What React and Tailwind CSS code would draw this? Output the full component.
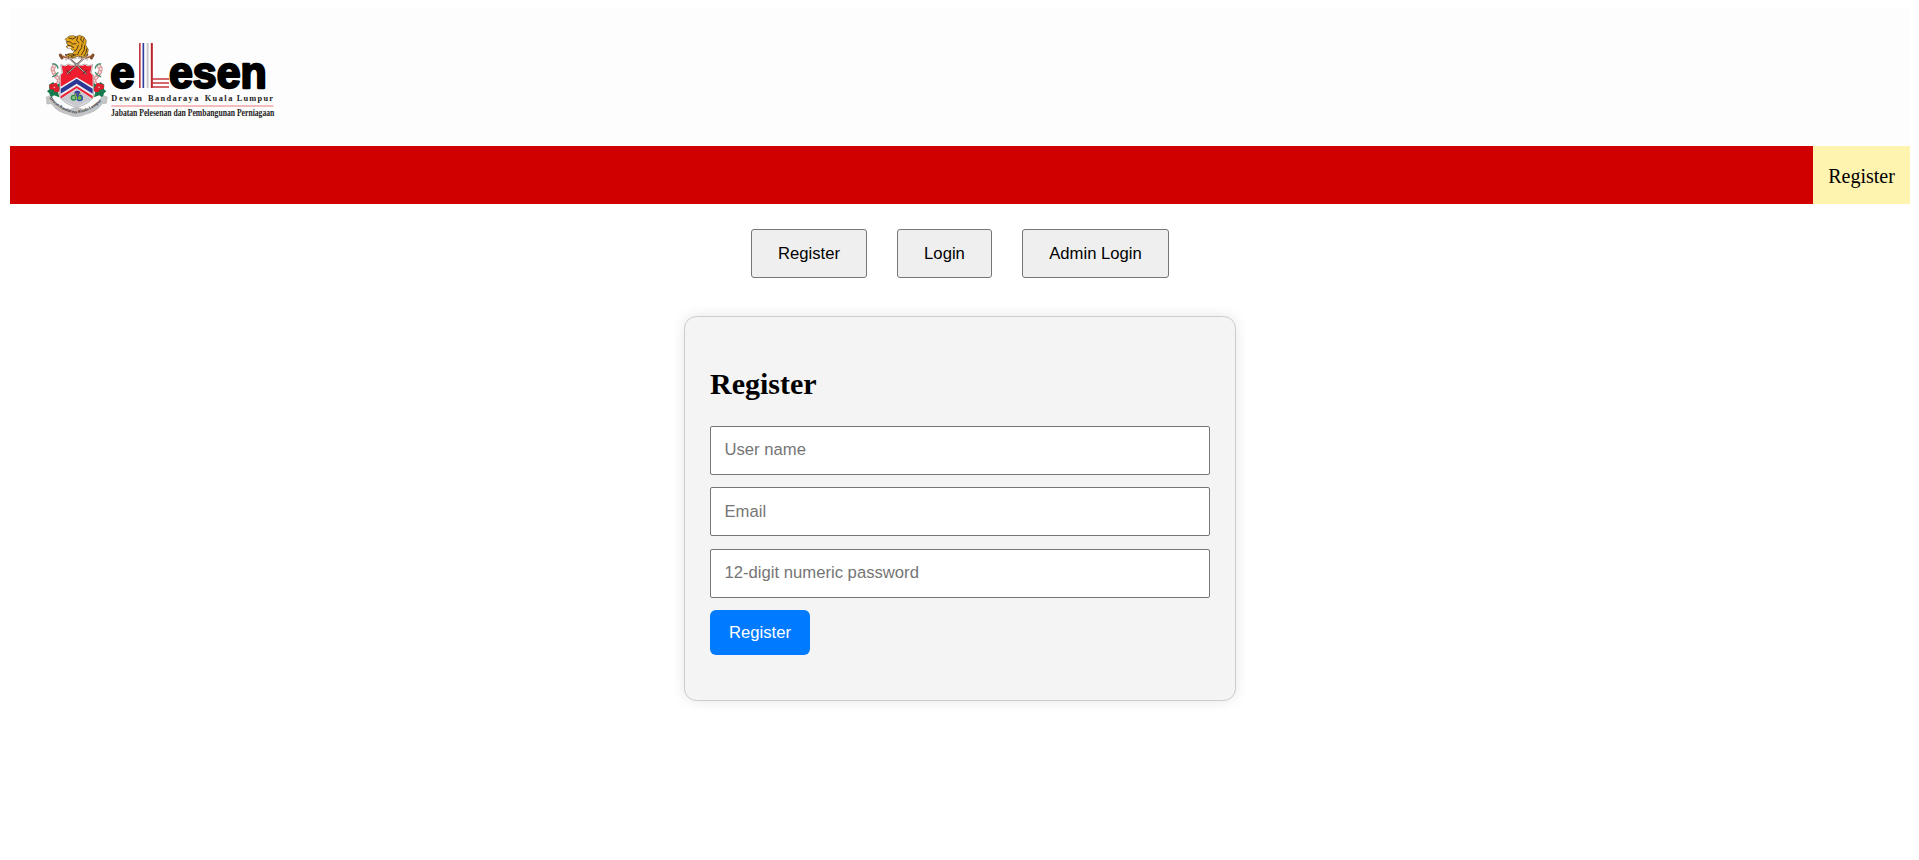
function Crest() {
  return (
    <g transform="translate(120 84)">
      {/* mantling and hibiscus on both sides */}
      <g fill="none" strokeLinecap="round">
        <path d="M44 114Q34 120 40 132T54 152T50 170" stroke="#dc9a9a" strokeWidth="12" />
        <path d="M176 114Q186 120 180 132T166 152T170 170" stroke="#dc9a9a" strokeWidth="12" />
        <path d="M44 114Q34 120 40 132T54 152T50 170M176 114Q186 120 180 132T166 152T170 170" stroke="#f5e8e8" strokeWidth="5" strokeDasharray="2 8" />
        <path d="M38 108Q50 106 54 120M182 108Q170 106 166 120M54 134Q46 144 38 146M166 134Q174 144 182 146" stroke="#3a8a67" strokeWidth="4" />
      </g>
      <g fill="#157a4c">
        <path d="M27 170l12-8 9 10 10-6 6 14-10 12 4 16-16-6-10 8-4-14-7-6 7-6z" />
        <path d="M193 170l-12-8-9 10-10-6-6 14 10 12-4 16 16-6 10 8 4-14 7-6-7-6z" />
      </g>
      <g fill="#df1f2d">
        <circle cx="37" cy="176" r="9" /><circle cx="50" cy="184" r="9" /><circle cx="46" cy="172" r="7" />
        <circle cx="183" cy="176" r="9" /><circle cx="170" cy="184" r="9" /><circle cx="174" cy="172" r="7" />
      </g>
      <g fill="#f6b6b6"><circle cx="43" cy="178" r="2.500" /><circle cx="177" cy="178" r="2.500" /></g>
      {/* shield */}
      <path d="M62 110Q74 117 85 108Q98 116 110 108Q122 116 135 108Q147 117 158 110L154 134L161 142V206Q150 226 110 239Q70 226 59 206V142L66 134Z" fill="#ededf0" stroke="#777" strokeWidth="1.5" />
      <path d="M65 112Q75 118 85 110Q98 117 110 110Q122 117 135 110Q145 118 155 112L151 134L158 142V176L110 148L62 176V142L69 134Z" fill="#ed1c2e" />
      <path d="M62 182L110 152L158 182V197L110 167L62 197Z" fill="#2c3795" />
      <path d="M62 204L110 174L158 204V212L110 181L62 212Z" fill="#e9253a" />
      <path d="M62 213L110 183L158 213L110 237Z" fill="#c9cad0" />
      <g fill="none" strokeWidth="4">
        <circle cx="112" cy="197" r="7" stroke="#2c3795" fill="#4d579c" />
        <circle cx="101" cy="209" r="7" stroke="#268b43" fill="#8ac28b" />
        <circle cx="119" cy="210" r="8" stroke="#2746a5" fill="#71b342" />
        <path d="M105 196L111 214M122 193L117 203" stroke="#b1c449" strokeWidth="3" />
      </g>
      {/* crossed kris and cannons */}
      <g fill="none" strokeLinecap="round">
        <path d="M77 80L138 137M143 80L82 137" stroke="#513b36" strokeWidth="4.5" />
        <path d="M79 82L138 137M141 82L82 137" stroke="#e1d9d7" strokeWidth="2.3" />
        <path d="M80 127L91 137M140 127L129 137" stroke="#4b3735" strokeWidth="3" />
        <path d="M61 83L85 91L103 88M159 83L135 91L117 88" stroke="#9a5733" strokeWidth="6" />
        <path d="M61 81L66 90M159 81L154 90" stroke="#80502f" strokeWidth="9" />
        <path d="M67 82L83 88M153 82L137 88" stroke="#e8b078" strokeWidth="2" />
      </g>
      <path d="M76 96Q88 87 109 91Q131 86 144 96" fill="none" stroke="#c5c5c5" strokeWidth="6" strokeDasharray="9 4" />
      {/* tiger */}
      <path d="M80 39L75 34L82 29L88 24L100 23L108 26L119 22L132 27L139 38L137 51L145 65L142 78L133 88L116 84L96 90L78 83L86 77L99 76L105 66L96 67L92 61L84 61L78 56L85 52L80 47Z" fill="#e5a51c" stroke="#3a2913" strokeWidth="1.5" />
      <g fill="none" stroke="#2f2515" strokeWidth="2.5" strokeLinecap="round">
        <path d="M87 30L98 33L107 28M81 41L91 42L98 48L108 47M84 52L94 54L101 59" />
        <path d="M113 27L110 37L117 45M124 27L122 36L131 45M132 32L129 40M115 52L112 61L106 70M126 48L125 59L117 70L113 80M134 53L133 66L124 80M141 62L137 76L132 83" />
        <path d="M83 79L91 82L103 79M94 86L108 80" />
      </g>
      <path d="M84 55L94 57L91 62L84 60Z" fill="#eee" />
      {/* motto ribbon */}
      <path d="M19 207L31 203L38 212Q59 241 87 245L109 238L133 245Q161 241 182 212L189 203L202 207L199 226L187 227Q168 252 136 259Q126 265 109 266Q92 265 83 259Q52 252 34 227L21 228Z" fill="#c4c5c7" stroke="#9a9b9f" strokeWidth="1.2" />
      <path id="motto" d="M28 211Q61 251 109 256Q157 251 194 209" fill="none" />
      <text fontFamily="'Liberation Serif', serif" fontSize="13" fontWeight="bold" fill="#3a3a3a">
        <textPath href="#motto" textLength="182">Dewan Bandaraya Kuala Lumpur</textPath>
      </text>
    </g>
  );
}

function Logo() {
  return (
    <svg className="block h-[95px] w-[240px] overflow-visible" viewBox="120 90 720 285" role="img" aria-label="eLesen">
      <Crest />
      <g fontFamily="'Liberation Sans', sans-serif" fontWeight="bold" fontSize="131" stroke="#000" strokeWidth="7" strokeLinejoin="round">
        <text x="331" y="263" textLength="73" lengthAdjust="spacingAndGlyphs">e</text>
        <text x="507" y="263" textLength="293" lengthAdjust="spacingAndGlyphs">esen</text>
      </g>
      <path d="M419.5 129V264" stroke="#c33c42" strokeWidth="5" />
      <path d="M430 129V264" stroke="#343e9e" strokeWidth="5" />
      <path d="M443 129V264" stroke="#c9c9cc" strokeWidth="6" />
      <path d="M455.500 129V264" stroke="#b9232b" strokeWidth="6" />
      <path d="M455 237H507M455 249H507M455 261H507" stroke="#c5363c" strokeWidth="5" />
      <g fontFamily="'Liberation Serif', serif" fontWeight="bold" fill="#222">
        <text x="334" y="304" fontSize="25" textLength="92">Dewan</text>
        <text x="444" y="304" fontSize="25" textLength="151">Bandaraya</text>
        <text x="614" y="304" fontSize="25" textLength="83">Kuala</text>
        <text x="710" y="304" fontSize="25" textLength="109">Lumpur</text>
        <text x="333" y="347" fontSize="28" textLength="490" lengthAdjust="spacingAndGlyphs">Jabatan Pelesenan dan Pembangunan Perniagaan</text>
      </g>
      <path d="M334 318H820" stroke="#f0a6aa" strokeWidth="4" />
    </svg>
  );
}

const tabClass = "h-[49px] rounded-[3px] border border-[#767676] bg-[#efefef] text-center text-black";
const inputClass = "block h-[49px] w-full rounded-[2px] border border-[#767676] bg-white px-[13.5px] text-black outline-none placeholder:text-[#757575]";

export default function App() {
  return (
    <div className="h-[860px] overflow-hidden bg-white px-[10px] pt-[7px] font-['Liberation_Serif',serif] text-black">
      <header className="h-[139px] w-[1900px] bg-[#fdfdfd] pt-[23px] pl-[30px]">
        <Logo />
      </header>
      <nav className="flex h-[58px] w-[1900px] justify-end bg-[#d00000]">
        <a className="flex w-[97px] items-center justify-center pt-[2px] bg-[#fff3b0] text-[20px] leading-[23px]">Register</a>
      </nav>
      <div className="mt-[25px] ml-[741px] flex gap-[30px] font-['Liberation_Sans',sans-serif] text-[16.667px]">
        <button className={`${tabClass} w-[116px]`}>Register</button>
        <button className={`${tabClass} w-[95px]`}>Login</button>
        <button className={`${tabClass} w-[147px]`}>Admin Login</button>
      </div>
      <main className="mt-[38px] ml-[674px] h-[385px] w-[552px] rounded-[12.5px] border border-[#ccc] bg-[#f4f4f4] px-[25px] pt-[50px] shadow-[0_0_12.5px_rgba(0,0,0,0.1)]">
        <h2 className="text-[30px] leading-[34px] font-bold">Register</h2>
        <form className="mt-[25px] font-['Liberation_Sans',sans-serif] text-[16.667px]" onSubmit={(e) => e.preventDefault()}>
          <input className={`${inputClass} pb-[2px]`} placeholder="User name" />
          <input className={`${inputClass} mt-[12px]`} placeholder="Email" />
          <input className={`${inputClass} mt-[13px] pb-[2px]`} type="password" placeholder="12-digit numeric password" />
          <button className="mt-[12px] block h-[45px] w-[100px] rounded-[6px] bg-[#007bff] text-white">Register</button>
        </form>
      </main>
    </div>
  );
}
